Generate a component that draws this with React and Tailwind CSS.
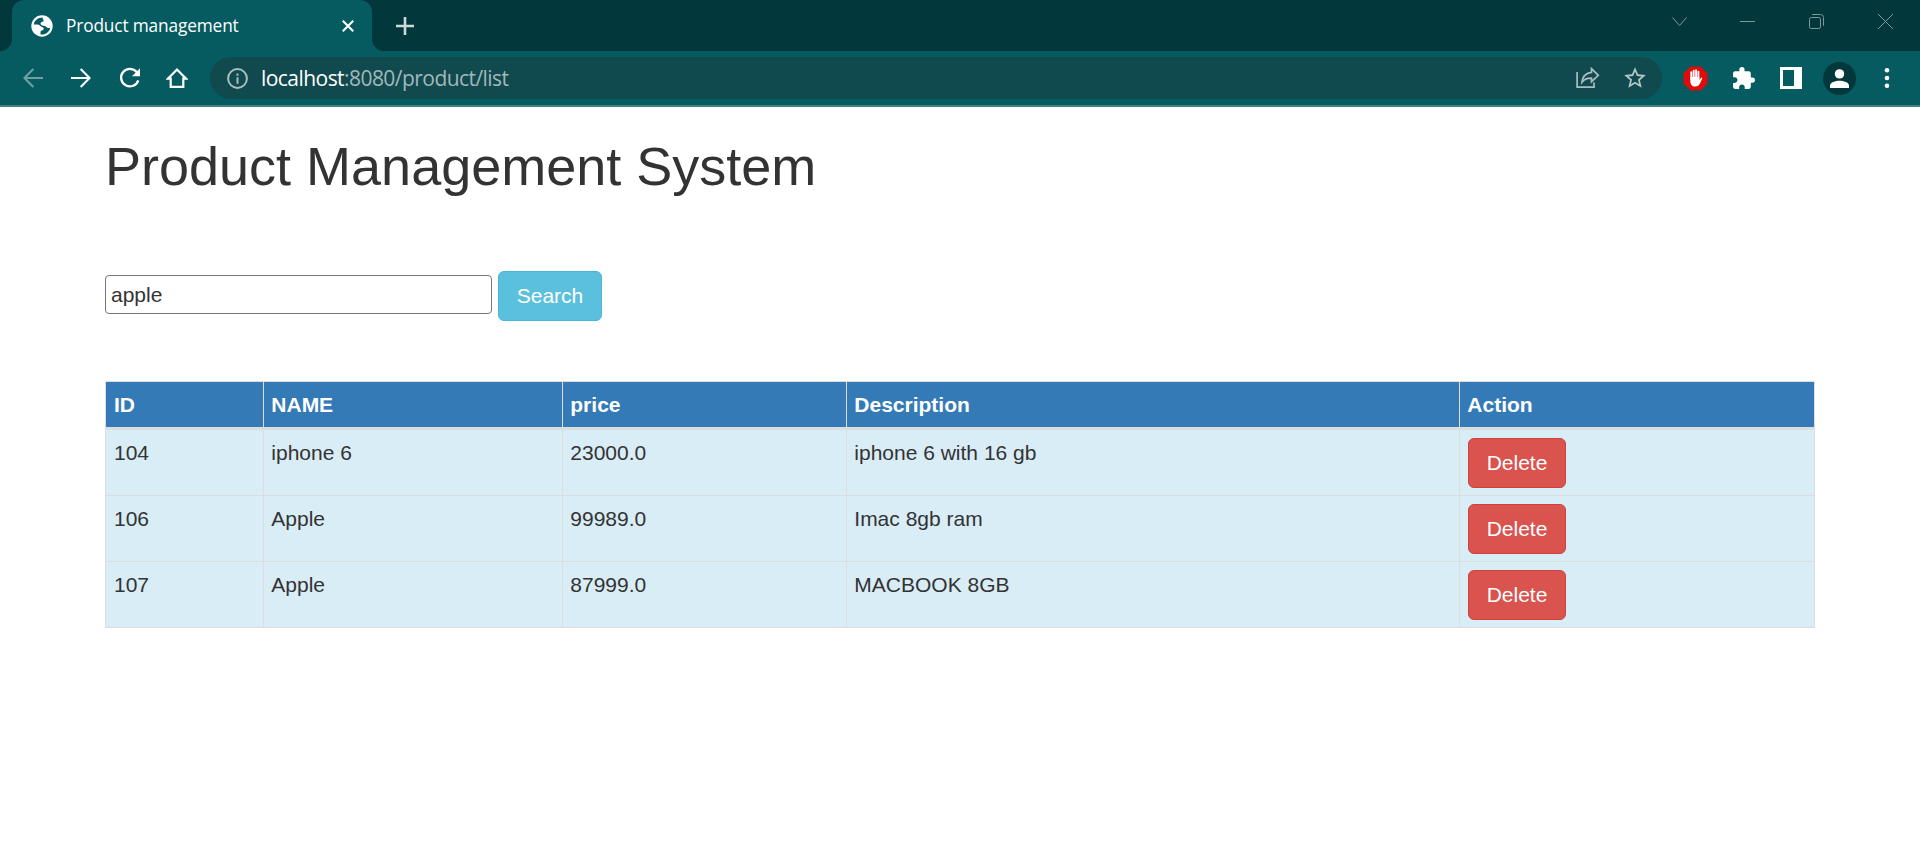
import React from "react";
import { MdExtension, MdStarBorder } from "react-icons/md";

const rows = [
  ["104", "iphone 6", "23000.0", "iphone 6 with 16 gb"],
  ["106", "Apple", "99989.0", "Imac 8gb ram"],
  ["107", "Apple", "87999.0", "MACBOOK 8GB"],
];

function Cell({ children }) {
  return <div className="flex h-12 w-12 shrink-0 items-center justify-center text-white">{children}</div>;
}

function TabStrip() {
  return (
    <div className="flex h-[51px] bg-[#055b60]">
      <div className="w-3 rounded-br-xl bg-[#02373c]" />
      <div className="w-[360px] bg-[linear-gradient(#02373c_50%,#055b60_50%)]">
        <div className="flex h-full items-center rounded-t-xl bg-[#055b60] pl-[19px] pr-[18px]">
          <svg width="22" height="22" viewBox="0 0 22 22" className="shrink-0">
            <circle cx="11" cy="11" r="10.7" fill="#fff" />
            <path
              d="M11.500 2.600C7 2.500 3.500 5.500 2.700 9.600H6.500C8.600 9.600 9.200 11.300 10.300 11.700C11.800 12 13 12.800 12.600 14.200C12.200 15.500 10 15.200 9.600 16.500C9.300 17.500 9.600 18.500 9.500 19.400C14.500 20 18.500 17 19.300 12.400C18 13.300 16.500 13.200 15.300 12C14.200 10.900 12.800 11 11.300 10.500C9.300 9.800 8.900 8 10.300 7.300C11.600 6.700 12.900 6.500 12.600 5.100C12.400 4.200 11.300 3.700 11.500 2.600Z"
              fill="#055b60"
            />
          </svg>
          <span className="ml-[13px] flex-1 whitespace-nowrap font-['Open_Sans',sans-serif] text-[17.3px] leading-6 tracking-[-0.15px] text-white">
            Product management
          </span>
          <svg width="12" height="12" viewBox="0 0 12 12" className="shrink-0" stroke="#fff" strokeWidth="2.1">
            <path d="M0.700 0.700L11.300 11.300M11.300 0.700L0.700 11.300" />
          </svg>
        </div>
      </div>
      <div className="flex flex-1 justify-between rounded-bl-xl bg-[#02373c]">
        <div className="flex h-[51px] items-center pl-6">
          <svg width="18" height="18" viewBox="0 0 18 18" stroke="#cddadb" strokeWidth="2.6">
            <path d="M9 0V18M0 9H18" />
          </svg>
        </div>
        <div className="flex h-[43px] text-[#7d999c]">
          <div className="flex w-[69px] items-center justify-center pl-px">
            <svg width="15" height="15" viewBox="0 0 15 15" fill="none" stroke="currentColor">
              <path d="M0.500 3.500L7.500 11.500L14.500 3.500" />
            </svg>
          </div>
          <div className="flex w-[69px] items-center justify-center">
            <svg width="15" height="15" viewBox="0 0 15 15" fill="none" stroke="currentColor">
              <path d="M0 7.500H15" />
            </svg>
          </div>
          <div className="flex w-[69px] items-center justify-center">
            <svg width="15" height="15" viewBox="0 0 15 15" fill="none" stroke="currentColor">
              <rect x="0.500" y="3.500" width="11" height="11" rx="1.800" />
              <path d="M3.300 0.500H11.500A3 3 0 0 1 14.500 3.500V11.700" />
            </svg>
          </div>
          <div className="flex w-[69px] items-center justify-center">
            <svg width="15" height="15" viewBox="0 0 15 15" fill="none" stroke="currentColor">
              <path d="M0 0L15 15M15 0L0 15" />
            </svg>
          </div>
        </div>
      </div>
    </div>
  );
}

function Toolbar() {
  return (
    <div className="flex h-[56px] items-center border-b-2 border-[#457f82] bg-[#055b60] px-[9px]">
      <Cell>
        <svg width="20" height="20" viewBox="0 0 20 20" fill="none" stroke="#6fa0a3" strokeWidth="2.100">
          <path d="M20 10H1.700M10.300 0.900L1.400 10L10.300 19.100" />
        </svg>
      </Cell>
      <Cell>
        <svg width="20" height="20" viewBox="0 0 20 20" fill="none" stroke="#fff" strokeWidth="2.100">
          <path d="M0 10H18.300M9.700 0.900L18.600 10L9.700 19.100" />
        </svg>
      </Cell>
      <Cell>
        <svg width="22" height="22" viewBox="0 0 22 22" fill="none" className="ml-px">
          <path d="M17.700 5A8.800 8.800 0 1 0 19.300 13.300" stroke="#fff" strokeWidth="2.300" />
          <path d="M21 1.200V9.200H13Z" fill="#fff" />
        </svg>
      </Cell>
      <Cell>
        <svg width="22" height="22" viewBox="0 0 22 22" fill="none" stroke="#fff" strokeWidth="2.200">
          <path d="M1.900 11.600H4.700V19.800H17.300V11.600H20.100L11 2.500Z" />
        </svg>
      </Cell>
      <div className="ml-[9px] mr-[9px] flex h-[42px] flex-1 items-center rounded-full bg-[#10494e] pl-[17px] pr-[14px]">
        <svg width="21" height="21" viewBox="0 0 21 21" fill="none" stroke="#a9bec0" strokeWidth="2">
          <circle cx="10.500" cy="10.500" r="9.400" />
          <path d="M10.500 9.200V15.700M10.500 5.500V7.700" />
        </svg>
        <span className="ml-[13px] flex-1 whitespace-nowrap font-['Open_Sans',sans-serif] text-[21px] leading-7 tracking-[-0.55px] text-[#a1b8ba]">
          <span className="text-white">localhost</span>:8080/product/list
        </span>
        <svg width="24" height="22" viewBox="0 0 24 22" fill="none" stroke="#a9bec0" strokeWidth="1.700" className="mr-[22px]">
          <path d="M1.100 5V20.200H18V15.500" />
          <path d="M15.500 1.700L22.300 8.300L15.500 14.700V11.200C11.500 11 8.500 12 6 15.200C6.500 9.700 9.500 6 15.500 5.300Z" />
        </svg>
        <MdStarBorder className="h-[26px] w-[26px] shrink-0 text-[#b5c8ca]" />
      </div>
      <Cell>
        <svg width="25" height="25" viewBox="0 0 25 25">
          <path d="M7.500 0.500H17.500L24.500 7.500V17.500L17.500 24.500H7.500L0.500 17.500V7.500Z" fill="#e00b0b" />
          <path d="M8.300 6.300V13M10.700 4.600V13M13.100 4.300V13M15.400 5.800V15" stroke="#fff" strokeWidth="1.900" strokeLinecap="round" />
          <path d="M7.350 11H16.350V14.200L18.200 11.700C18.700 11.200 19.500 11.700 19.200 12.400L17.200 17C16.200 19.400 14.600 20.600 12.300 20.600C9 20.600 7.350 18.500 7.350 15Z" fill="#fff" />
        </svg>
      </Cell>
      <Cell>
        <MdExtension className="h-[25px] w-[25px]" />
      </Cell>
      <Cell>
        <svg width="22" height="22" viewBox="0 0 22 22">
          <path fillRule="evenodd" d="M0 0H22V22H0ZM3 3V19H14V3Z" fill="#fff" />
        </svg>
      </Cell>
      <Cell>
        <div className="flex h-[33px] w-[33px] items-center justify-center rounded-full bg-[#02373c]">
          <svg width="19" height="19" viewBox="0 0 19 19" fill="#fff">
            <circle cx="9.500" cy="4.900" r="4.700" />
            <path d="M0 19V16.500C0 13.200 5.500 11.700 9.500 11.700S19 13.200 19 16.500V19Z" />
          </svg>
        </div>
      </Cell>
      <Cell>
        <svg width="6" height="22" viewBox="0 0 6 22" fill="#fff">
          <circle cx="3" cy="3.200" r="2.300" />
          <circle cx="3" cy="11" r="2.300" />
          <circle cx="3" cy="18.800" r="2.300" />
        </svg>
      </Cell>
    </div>
  );
}

const th = "h-[48px] border-r border-b-3 border-[#ddd] bg-[#337ab7] px-[7.3px] first:pl-[8px] text-left align-middle font-bold text-white";
const td = "h-[66px] border-r border-b border-[#ddd] bg-[#d9edf7] px-[7.3px] first:pl-[8px] last:pl-[8px] pt-[8px] align-top";

export default function App() {
  return (
    <div className="min-h-[850px] bg-white">
      <TabStrip />
      <Toolbar />
      <main className="pl-[105px] font-['Liberation_Sans',Arial,sans-serif] text-[21px] leading-[30px] text-[#333]">
        <h1 className="pt-[29px] text-[54px] font-normal leading-[60px]">Product Management System</h1>
        <div className="mt-[75px] flex items-start">
          <input
            defaultValue="apple"
            className="mt-[4px] h-[39px] w-[387px] rounded-[4px] border border-[#767676] bg-white px-[5px] outline-none"
          />
          <button className="ml-[6px] h-[50px] w-[104px] rounded-[6px] border border-[#46b8da] bg-[#5bc0de] text-white">
            Search
          </button>
        </div>
        <table className="mt-[60px] w-[1710px] table-fixed border-separate border-spacing-0 border-l border-t border-[#ddd]">
          <colgroup>
            <col className="w-[158px]" />
            <col className="w-[299px]" />
            <col className="w-[284px]" />
            <col className="w-[613px]" />
            <col className="w-[355px]" />
          </colgroup>
          <thead>
            <tr>
              {["ID", "NAME", "price", "Description", "Action"].map((h) => (
                <th key={h} className={th}>{h}</th>
              ))}
            </tr>
          </thead>
          <tbody>
            {rows.map((r) => (
              <tr key={r[0]}>
                {r.map((c, i) => (
                  <td key={i} className={td}>{c}</td>
                ))}
                <td className={td}>
                  <button className="block h-[50px] w-[98px] rounded-[6px] border border-[#d43f3a] bg-[#d9534f] text-white">
                    Delete
                  </button>
                </td>
              </tr>
            ))}
          </tbody>
        </table>
      </main>
    </div>
  );
}
